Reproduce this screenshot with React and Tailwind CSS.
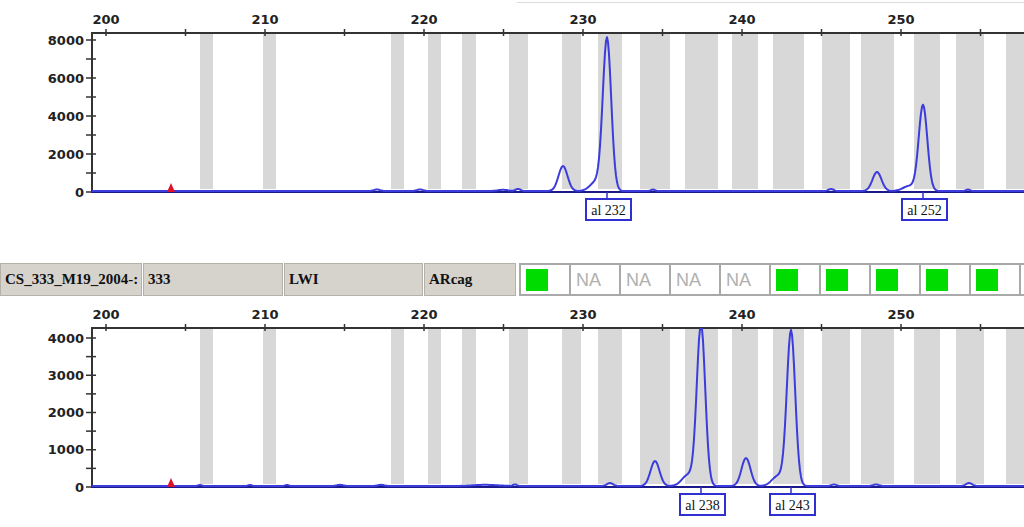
import React from 'react'

const BINS = [
  [200, 213], [263, 276], [391, 404], [428, 441], [462, 476], [509, 528],
  [562, 581], [598, 622], [640, 670], [685, 718], [732, 758], [773, 804],
  [822, 850], [861, 894], [914, 940], [956, 984], [1006, 1024],
]

// x position of a base-pair value
const bpX = (v) => 106 + (v - 200) * 15.9

function tracePath(peaks, top, base) {
  let d = ''
  for (let x = 92; x <= 1024; x += 1) {
    let h = 0
    for (const [c, amp, s] of peaks) {
      h += amp * Math.exp(-((x - c) * (x - c)) / (2 * s * s))
    }
    const y = Math.max(top + 1, base - 1 - h)
    d += (x === 92 ? 'M' : 'L') + x + ' ' + y.toFixed(1) + ' '
  }
  return d
}

function Chart({ height, top, base, labelTop, yMax, major, minor, peaks, calls }) {
  const scale = (base - labelTop) / yMax
  const yTicks = []
  for (let v = 0; v <= yMax; v += minor) yTicks.push(v)
  const xTicks = []
  for (let v = 200; v <= 255; v += 5) xTicks.push(v)

  return (
    <svg width="1024" height={height} className="block shrink-0">
      {/* bins */}
      {BINS.map(([a, b]) => (
        <rect key={a} x={a} y={top + 1} width={b - a} height={base - top - 4} fill="#d8d8d8" />
      ))}

      {/* x axis along the top */}
      <line x1="91" y1={top} x2="1024" y2={top} stroke="#333" strokeWidth="2" />
      {xTicks.map((v) => (
        <line key={v} x1={bpX(v)} y1={top - 4} x2={bpX(v)} y2={top + 3} stroke="#333" strokeWidth="1.5" />
      ))}
      {xTicks.filter((v) => v % 10 === 0).map((v) => (
        <text
          key={v}
          x={bpX(v)}
          y={top - 9}
          textAnchor="middle"
          fontFamily="'DejaVu Sans', sans-serif"
          fontWeight="bold"
          fontSize="13"
          fill="#222"
        >
          {v}
        </text>
      ))}

      {/* y axis */}
      <line x1="92" y1={top} x2="92" y2={base + 1} stroke="#333" strokeWidth="2" />
      {yTicks.map((v) => (
        <line key={v} x1="86" y1={base - v * scale} x2="96" y2={base - v * scale} stroke="#333" strokeWidth="1.5" />
      ))}
      {yTicks.filter((v) => v % major === 0).map((v) => (
        <text
          key={v}
          x="84"
          y={base - v * scale + 4.5}
          textAnchor="end"
          fontFamily="'DejaVu Sans', sans-serif"
          fontWeight="bold"
          fontSize="13"
          fill="#222"
        >
          {v}
        </text>
      ))}

      {/* baseline + trace */}
      <line x1="92" y1={base} x2="1024" y2={base} stroke="#1a1a8a" strokeWidth="2" />
      <path d={tracePath(peaks, top, base)} fill="none" stroke="#3c3cdc" strokeWidth="2" strokeLinejoin="round" />

      {/* reference marker */}
      <polygon points={`167,${base} 175,${base} 171,${base - 9}`} fill="#e0102a" />

      {/* allele calls */}
      {calls.map(([x, label]) => (
        <g key={label}>
          <line x1={x} y1={base} x2={x} y2={base + 7} stroke="#3030c8" strokeWidth="1.5" />
          <rect x={x - 21} y={base + 7} width="45" height="21" fill="#fff" stroke="#3030d0" strokeWidth="2" />
          <text
            x={x + 1.5}
            y={base + 22.5}
            textAnchor="middle"
            fontFamily="'Liberation Serif', serif"
            fontSize="14"
            fill="#111"
          >
            {label}
          </text>
        </g>
      ))}
    </svg>
  )
}

const TOP_PEAKS = [
  [377, 1.5, 3], [420, 1.5, 3], [503, 1.2, 5], [518, 2, 2.5],
  [563, 25, 4.5], [596, 9, 6], [607, 152, 4.2], [653, 1.5, 2],
  [831, 2, 2.5], [877, 19, 4.5], [909, 5, 6], [923, 86, 4.3], [968, 1.5, 2],
]

const BOTTOM_PEAKS = [
  [200, 1, 2], [250, 1, 2], [287, 1, 2], [340, 1.2, 3], [381, 1.2, 3],
  [485, 1.2, 12], [515, 1.5, 2], [610, 3, 3], [655, 25, 4.5], [688, 11, 6],
  [701, 162, 4.2], [746, 28, 4.5], [778, 10, 6], [791, 155, 4.2],
  [834, 1.5, 2.5], [876, 1.5, 3], [969, 3, 3],
]

const GRAY_CELLS = [
  ['CS_333_M19_2004-:', 'w-[142px]'],
  ['333', 'w-[140px]'],
  ['LWI', 'w-[139px]'],
  ['ARcag', 'w-[92px]'],
]

const MARKS = ['g', 'na', 'na', 'na', 'na', 'g', 'g', 'g', 'g', 'g', 'x']

function SampleRow() {
  return (
    <div className="flex h-[33px] mt-[33px] shrink-0 overflow-hidden">
      {GRAY_CELLS.map(([text, w]) => (
        <div
          key={text}
          className={`${w} shrink-0 h-full bg-[#d6d2cc] border border-[#b4b0aa] mr-[1px] flex items-center px-[4px] overflow-hidden whitespace-nowrap font-['Liberation_Serif',serif] font-bold text-[15px] text-[#111]`}
        >
          {text}
        </div>
      ))}
      <div className="w-[2px] shrink-0" />
      {MARKS.map((m, i) => (
        <div
          key={i}
          className="w-[50px] shrink-0 h-full bg-white border-2 border-r-0 border-[#a9a9a9] flex items-center pl-[5px]"
        >
          {m === 'g' && <div className="w-[22px] h-[22px] bg-[#00dc00]" />}
          {m === 'na' && (
            <span className="font-['Liberation_Sans',sans-serif] text-[18px] text-[#b0b0b0] leading-none">NA</span>
          )}
        </div>
      ))}
    </div>
  )
}

export default function App() {
  return (
    <div className="w-[1024px] h-[527px] bg-white overflow-hidden flex flex-col relative">
      <div className="absolute top-[2px] left-[517px] right-0 h-[1px] bg-[#dcdcdc]" />
      <Chart
        height={230}
        top={33}
        base={192}
        labelTop={40}
        yMax={8000}
        major={2000}
        minor={1000}
        peaks={TOP_PEAKS}
        calls={[[607, 'al 232'], [923, 'al 252']]}
      />
      <SampleRow />
      <Chart
        height={231}
        top={32}
        base={191}
        labelTop={42}
        yMax={4000}
        major={1000}
        minor={500}
        peaks={BOTTOM_PEAKS}
        calls={[[701, 'al 238'], [791, 'al 243']]}
      />
    </div>
  )
}
